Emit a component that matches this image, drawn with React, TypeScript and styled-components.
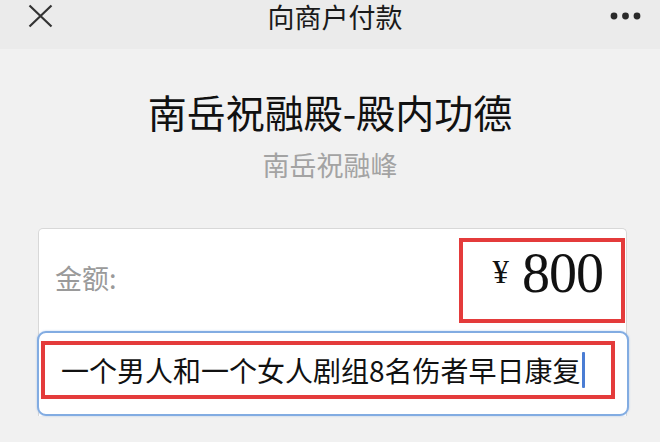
import React from 'react';
import styled, { createGlobalStyle } from 'styled-components';

const GlobalStyle = createGlobalStyle`
  html, body {
    margin: 0;
    padding: 0;
    background: #f1f1f1;
  }
  body {
    font-family: "Noto Sans CJK SC", "Noto Sans", sans-serif;
  }
`;

const Page = styled.div`
  width: 660px;
  height: 442px;
  overflow: hidden;
  background: #f1f1f1;
  display: flex;
  flex-direction: column;
`;

const Header = styled.div`
  height: 49px;
  background: #ebebeb;
  display: grid;
  grid-template-columns: 100px 1fr 100px;
  align-items: start;
  padding: 0 18px 0 28px;
  box-sizing: border-box;
`;

const IconButton = styled.div<{ $align?: 'start' | 'end' }>`
  display: flex;
  height: 32px;
  align-items: center;
  justify-content: ${p => (p.$align === 'end' ? 'flex-end' : 'flex-start')};
`;

const HeaderTitle = styled.div`
  padding-top: 1px;
  text-align: center;
  font-size: 27px;
  line-height: 32px;
  color: #1a1a1a;
`;

const Body = styled.div`
  display: flex;
  flex-direction: column;
  align-items: center;
  padding-top: 38px;
`;

const Merchant = styled.div`
  font-size: 39px;
  line-height: 48px;
  color: #111;
`;

const Store = styled.div`
  margin-top: 13px;
  font-size: 27px;
  line-height: 34px;
  color: #a3a3a3;
`;

const Card = styled.div`
  margin: 46px 0 0 38px;
  align-self: flex-start;
  width: 589px;
  background: #fff;
  border: 1px solid #d8d8d8;
  border-bottom: none;
  border-radius: 5px 5px 0 0;
  box-sizing: border-box;
`;

const AmountRow = styled.div`
  height: 102px;
  display: flex;
  justify-content: space-between;
  align-items: flex-start;
`;

const Label = styled.div`
  margin-top: 33px;
  padding-left: 16px;
  font-size: 27px;
  line-height: 32px;
  color: #9a9a9a;
`;

const Highlight = styled.div`
  border: 4px solid #e43b3b;
  box-sizing: border-box;
`;

const AmountBox = styled(Highlight)`
  margin-top: 9px;
  margin-right: 1px;
  width: 166px;
  height: 85px;
  display: flex;
  align-items: center;
  justify-content: flex-end;
  padding: 0 18px 16px 0;
  gap: 13px;
  font-family: "Liberation Serif", "Times New Roman", serif;
  color: #111;
`;

const Yen = styled.span`
  font-size: 33px;
  line-height: 1;
`;

const Amount = styled.span`
  font-size: 56px;
  line-height: 1;
  letter-spacing: -1px;
`;

const NoteField = styled.div`
  margin: 0 -3px 0 -2px;
  height: 85px;
  border: 2px solid #82ace2;
  border-radius: 9px;
  box-shadow: 0 0 2px rgba(120, 165, 225, 0.6);
  padding: 8px 12px 0 2px;
  box-sizing: border-box;
  background: #fff;
`;

const NoteBox = styled(Highlight)`
  height: 58px;
  display: flex;
  align-items: center;
  padding-left: 16px;
`;

const NoteText = styled.span`
  font-size: 28px;
  line-height: 36px;
  color: #111;
  white-space: nowrap;
`;

const Caret = styled.span`
  display: inline-block;
  flex: none;
  width: 3px;
  height: 36px;
  margin-left: 1px;
  background: #4a7dd4;
  border-radius: 1px;
`;

const CloseIcon = () => (
  <svg width="25" height="24" viewBox="0 0 25 24">
    <path d="M1.5 1.5 L23.5 22.5 M23.5 1.5 L1.5 22.5" stroke="#333" strokeWidth="2.2" fill="none" />
  </svg>
);

const MoreIcon = () => (
  <svg width="32" height="8" viewBox="0 0 32 8">
    <circle cx="4" cy="4" r="3.4" fill="#2a2a2a" />
    <circle cx="15.5" cy="4" r="3.4" fill="#2a2a2a" />
    <circle cx="27" cy="4" r="3.4" fill="#2a2a2a" />
  </svg>
);

const App: React.FC = () => {
  return (
    <Page>
      <GlobalStyle />
      <Header>
        <IconButton>
          <CloseIcon />
        </IconButton>
        <HeaderTitle>向商户付款</HeaderTitle>
        <IconButton $align="end">
          <MoreIcon />
        </IconButton>
      </Header>
      <Body>
        <Merchant>南岳祝融殿-殿内功德</Merchant>
        <Store>南岳祝融峰</Store>
        <Card>
          <AmountRow>
            <Label>金额:</Label>
            <AmountBox>
              <Yen>¥</Yen>
              <Amount>800</Amount>
            </AmountBox>
          </AmountRow>
          <NoteField>
            <NoteBox>
              <NoteText>一个男人和一个女人剧组8名伤者早日康复</NoteText>
              <Caret />
            </NoteBox>
          </NoteField>
        </Card>
      </Body>
    </Page>
  );
};

export default App;
